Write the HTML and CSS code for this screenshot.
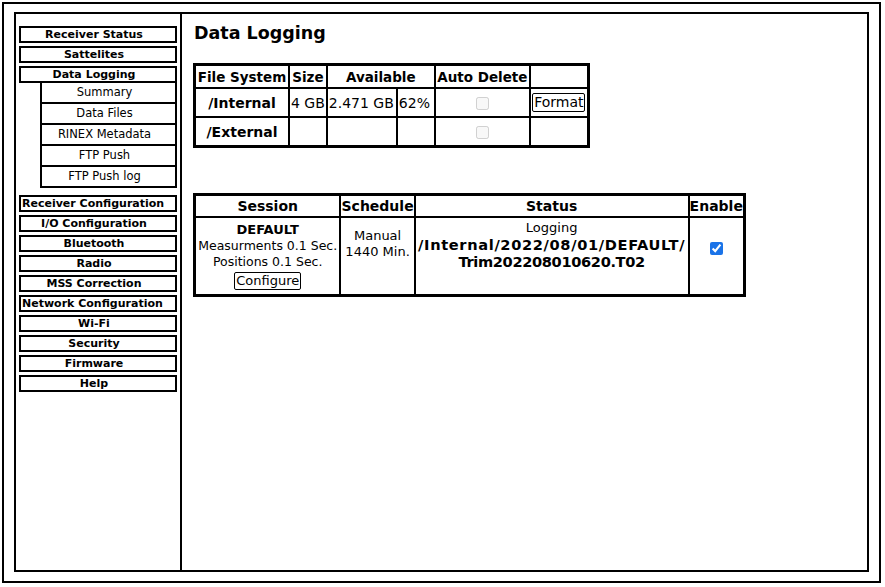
FILE: index.html
```html
<!DOCTYPE html>
<html>
<head>
<meta charset="utf-8">
<link rel="stylesheet" href="styles.css">
</head>
<body>
<div class="frame">
  <div class="inner">
    <nav class="side">
      <div class="item">Receiver Status</div>
      <div class="item">Sattelites</div>
      <div class="item">Data Logging</div>
      <div class="subs">
        <div class="sub">Summary</div>
        <div class="sub">Data Files</div>
        <div class="sub">RINEX Metadata</div>
        <div class="sub">FTP Push</div>
        <div class="sub">FTP Push log</div>
      </div>
      <div class="item wide">Receiver Configuration</div>
      <div class="item">I/O Configuration</div>
      <div class="item">Bluetooth</div>
      <div class="item">Radio</div>
      <div class="item">MSS Correction</div>
      <div class="item wide">Network Configuration</div>
      <div class="item">Wi-Fi</div>
      <div class="item">Security</div>
      <div class="item">Firmware</div>
      <div class="item">Help</div>
    </nav>
    <main class="main">
      <h1 class="title">Data Logging</h1>
      <table class="grid fs">
        <tr class="head">
          <th class="c-fs">File System</th>
          <th class="c-size">Size</th>
          <th colspan="2">Available</th>
          <th class="c-ad">Auto Delete</th>
          <th class="c-btn"></th>
        </tr>
        <tr class="row">
          <th class="path">/Internal</th>
          <td>4 GB</td>
          <td class="c-gb">2.471 GB</td>
          <td class="c-pct">62%</td>
          <td class="center"><input type="checkbox" disabled></td>
          <td class="center"><button class="btn fmt">Format</button></td>
        </tr>
        <tr class="row">
          <th class="path">/External</th>
          <td></td>
          <td></td>
          <td></td>
          <td class="center"><input type="checkbox" disabled></td>
          <td></td>
        </tr>
      </table>
      <table class="grid sess">
        <tr class="head">
          <th class="c-sess">Session</th>
          <th class="c-sch">Schedule</th>
          <th class="c-st">Status</th>
          <th class="c-en">Enable</th>
        </tr>
        <tr class="body">
          <td class="center s-sess">
            <b class="name">DEFAULT</b><br>Measurments 0.1 Sec.<br>Positions 0.1 Sec.<br><button class="btn cfg">Configure</button>
          </td>
          <td class="center s-sch">Manual<br>1440 Min.</td>
          <td class="center s-st"><div class="log">Logging</div><b class="file"><span class="p1">/Internal/2022/08/01/DEFAULT/</span><span class="p2">Trim202208010620.T02</span></b></td>
          <td class="center s-en"><input type="checkbox" class="chk" checked></td>
        </tr>
      </table>
    </main>
  </div>
</div>
</body>
</html>
```
FILE: styles.css
```css
html, body {
  margin: 0;
  padding: 0;
  background: #fff;
}
body {
  font-family: "DejaVu Sans", Verdana, sans-serif;
  color: #000;
}
.frame {
  margin: 2px 4px 4px 2px;
  border: 2px solid #000;
  padding: 8px 10px 9px 10px;
  box-sizing: border-box;
  height: 581px;
}
.inner {
  border: 2px solid #000;
  height: 100%;
  box-sizing: border-box;
  display: flex;
}
.side {
  border-right: 2px solid #000;
  padding: 12px 3px 0 3px;
  width: 158px;
}
.item {
  border: 2px solid #000;
  height: 13px;
  margin-bottom: 3px;
  padding-right: 8px;
  font-size: 11px;
  font-weight: bold;
  line-height: 13px;
  text-align: center;
  white-space: nowrap;
}
.item.wide {
  text-align: left;
  padding-left: 1px;
  padding-right: 0;
}
.subs {
  margin-left: 21px;
  margin-top: -3px;
  margin-bottom: 7px;
}
.sub {
  border: 2px solid #000;
  border-top: 0;
  height: 19px;
  line-height: 19px;
  font-size: 11.5px;
  padding-right: 8px;
  text-align: center;
  white-space: nowrap;
}
.main {
  flex: 1;
  padding: 0 11px;
}
.title {
  font-size: 17.5px;
  font-weight: bold;
  margin: 8px 0 0 1px;
  line-height: 22px;
}
.grid {
  border-collapse: collapse;
  border: 3px solid #000;
}
.grid th, .grid td {
  border: 2px solid #000;
  padding: 0 1px;
  font-size: 13px;
}
.fs {
  margin-top: 19px;
}
.fs .head th {
  height: 21px;
  font-size: 13.5px;
  white-space: nowrap;
}
.fs .row th, .fs .row td {
  height: 27px;
  white-space: nowrap;
  font-size: 14px;
}
.fs .path {
  font-size: 15px;
  text-align: center;
}
.c-fs { width: 90px; }
.c-size { width: 33px; }
.c-gb { width: 66px; }
.c-pct { width: 34px; }
.c-ad { width: 91px; }
.c-btn { width: 54px; }
.center { text-align: center; }
.btn {
  font-family: "DejaVu Sans", Verdana, sans-serif;
  background: #fff;
  color: #000;
  border: 1px solid #000;
  border-radius: 2px;
  padding: 0 1px;
  margin: 0;
}
.fmt {
  font-size: 14px;
  line-height: 17px;
}
.cfg {
  font-size: 13px;
  line-height: 16px;
  margin-top: 2px;
}
input[type=checkbox] {
  width: 13px;
  height: 13px;
  margin: 0;
  vertical-align: middle;
}
.sess {
  margin-top: 45px;
  width: 553px;
}
.sess .head th {
  height: 20px;
  font-size: 14px;
  padding: 0;
}
.sess .body {
  height: 78px;
}
.sess .body td {
  vertical-align: top;
  line-height: 16px;
  font-size: 12.5px;
  white-space: nowrap;
}
.sess .body .s-sess {
  padding-top: 4px;
}
.sess .body .s-sch {
  padding-top: 10px;
  font-size: 13px;
}
.sess .body .s-st {
  padding-top: 2px;
}
.log {
  font-size: 13px;
  line-height: 16px;
}
.file {
  display: block;
  font-size: 14.6px;
  line-height: 17px;
  padding-top: 0;
}
.p1, .p2 {
  display: block;
}
.p1 { letter-spacing: 0.65px; }
.p2 { letter-spacing: -0.35px; }
.sess .body .s-en {
  padding-top: 22px;
}
.c-sess { width: 143px; }
.c-sch { width: 72px; }
.c-st { width: 271px; }
.c-en { width: 53px; }
.name { font-size: 13px; }
.chk { accent-color: #1a73e8; }
```
